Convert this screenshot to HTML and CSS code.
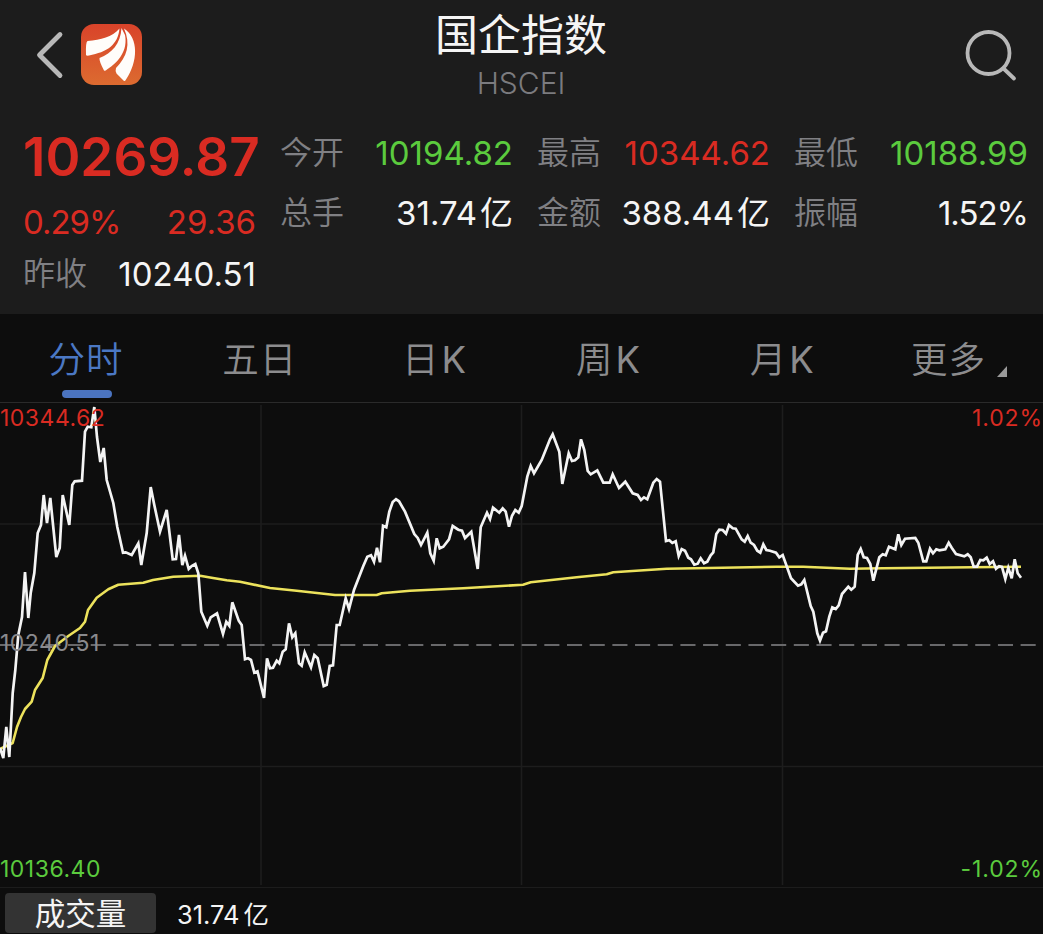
FILE: index.html
```
<!DOCTYPE html>
<html lang="zh-CN">
<head>
    <meta charset="UTF-8">
    <meta name="viewport" content="width=device-width, initial-scale=1.0">
    <title>国企指数 HSCEI</title>
    <link rel="stylesheet" href="styles.css">
</head>
<body>

<header class="top-bar">
    <div class="top-left">
        <svg class="back-icon" width="28" height="48" viewBox="0 0 28 48">
            <path d="M24 3.5 L3.500 24 L24 44.5"/>
        </svg>
        <svg class="logo" width="61" height="61" viewBox="0 0 61 61">
            <defs>
                <linearGradient id="logoBg" x1="0" y1="0" x2="0" y2="1">
                    <stop offset="0" stop-color="#d9432a"/>
                    <stop offset="1" stop-color="#dc6b30"/>
                </linearGradient>
            </defs>
            <rect width="61" height="61" rx="13" fill="url(#logoBg)"/>
            <path fill="#fffdfa" d="M38.500 4.500 C31 13 20 16 6.500 17 Q4.500 18 5 31 Q5.500 32 8 31.500 C26 28 37 21 38.500 4.500 Z"/>
            <path fill="#fffdfa" d="M40.500 4 C39.500 20 31 29 18.500 34 Q18 37 23 46.500 Q24 47.500 26 45.500 C38 38 47 26 44 11 Z"/>
            <path fill="#fffdfa" d="M43 4.500 C50 20 46 33 35 44 Q34 47 35.500 49.500 L43 57 Q44 57.500 45 55.500 C57 38 58 14 43 4.500 Z"/>
        </svg>
    </div>
    <div class="title">
        <h1>国企指数</h1>
        <p>HSCEI</p>
    </div>
    <svg class="search-icon" width="54" height="54" viewBox="0 0 54 54">
        <circle cx="24.500" cy="25" r="21"/>
        <path d="M39.500 40.500 L50 50.500"/>
    </svg>
</header>

<section class="quote">
    <div class="quote-main">
        <div class="price red">10269.87</div>
        <div class="row change red"><span class="percent">0.29%</span><span>29.36</span></div>
        <div class="row"><span class="label">昨收</span><span>10240.51</span></div>
    </div>
    <div class="quote-grid">
        <div class="row"><span class="label">今开</span><span class="green">10194.82</span></div>
        <div class="row"><span class="label">最高</span><span class="red">10344.62</span></div>
        <div class="row"><span class="label">最低</span><span class="green">10188.99</span></div>
        <div class="row"><span class="label">总手</span><span>31.74<span class="unit">亿</span></span></div>
        <div class="row"><span class="label">金额</span><span>388.44<span class="unit">亿</span></span></div>
        <div class="row"><span class="label">振幅</span><span class="percent">1.52%</span></div>
    </div>
</section>

<nav class="tabs">
    <a class="active">分时</a>
    <a>五日</a>
    <a>日<span class="k">K</span></a>
    <a>周<span class="k">K</span></a>
    <a>月<span class="k">K</span></a>
    <a class="more">更多<span class="corner"></span></a>
</nav>

<div class="chart">
    <svg width="1043" height="486" viewBox="0 402 1043 486">
        <g class="grid-lines">
            <path d="M0 524H1043M0 766.500H1043"/>
            <path d="M261 405V885M521.500 405V885M782.500 405V885"/>
        </g>
        <path class="base-line" d="M0 645H1036"/>
        <polyline class="avg-line" points="0,749 12.7,743 17,727 21,717 25,709 31.7,701.7 35,690 42.700,678 47.300,660 55,646 68.300,636 80,628 85,621.700 88,610 96.700,597.700 108.300,589.300 118.300,584.700 143.300,582.700 153,580 173.300,576.700 200,575.700 213,578 226.700,580.300 240,581.700 270,588 296.700,590.700 335,595 376.700,595 381.700,593.300 410,590.700 463,588.300 523,584.700 530.700,582.300 576.700,577.300 606.700,574.300 613.300,572.300 666.700,568.700 776.700,566.700 803,566.700 850,568.700 883,568.300 1021,566.700"/>
        <polyline class="price-line" points="0,748 3.3,758 6.3,727 9.300,757 12.700,693 15.300,670 18.300,635 22,617 25,572 28.300,618 30.700,593 34.300,573 37.700,533 41,525 43.700,495 47,523 50.300,498 56.300,557 59.700,548 62.700,495 69.300,525 72.300,485 74.700,481.300 82,480.700 85,431.700 87.700,426.700 91.300,427.300 94.300,407 97,437 100.300,462 103.700,448 106.700,480 113.300,503 117.300,527 123,552.700 125.700,552.300 131.700,555 138.300,543.300 141.300,565 146.700,533 150.700,487 154.300,505 160,531.700 166.700,510 172.700,559.300 176,559 179,535 182.300,565 185,555.700 188.700,569 191.700,566 195.300,564 198.300,573.300 201.300,611.700 207.300,625.700 210.700,617.300 217,613.300 223,634 226.300,621.700 229.300,625.700 232.300,602.300 238.700,620.700 241.700,625 245,659.300 248,658.300 251,660 254.300,672.700 257.500,671.300 264,698 267,658.300 270,668.300 273,667.700 276.700,660.700 279.300,663.300 282.700,651.700 285.700,649.300 289,623.300 292.300,637.300 295.300,633.300 299,663.300 301.700,665.700 304.700,652.300 311,667.300 314.300,655 317.700,658.300 323.700,686 326.700,684.700 329.700,666 333,665.300 336.700,625 339.700,625 345.700,598.300 349,609 354,590 363.300,566 367.300,556.700 371,555.300 374,561.700 377,547.700 380,562.300 383,525.700 386.300,527.300 389.300,511.700 392.700,502 396,499.300 399,501.300 405,511.700 414.300,534 417.700,538 421,545 427.300,532.700 430.300,553.300 433.700,560.700 436.700,538.300 439.700,548.300 443.300,546.700 449,539.300 452.700,526 458.300,529.700 462,530.700 465,538 471.300,531.700 477.700,569 480.700,527.300 487,512.700 490,519 493,507.700 499.300,512.700 502.700,508.300 505.700,511.700 509,526.700 512,515.700 515.300,510 518.700,512.700 521.700,506 527.300,476.700 530.700,466 534,473.300 541.700,460 550,439.300 552.700,434.300 559.300,451.700 562.300,484 568.700,453.300 572,461 575,460.300 578.300,457.300 581,439.300 584.300,450 587.700,471 590.700,474.300 597.300,470.300 603.300,482.700 609.700,482.700 612.700,474.300 619,488 625.300,481.700 632.700,493.300 637.700,495 641,500 644,497.300 647.300,499.300 653.300,482.700 656.700,479 660,481.700 666,541 669.300,540.300 672.300,543 675.700,541.300 678.700,556 681.700,549 685,550.700 688.300,557.700 691,559.300 694.300,564.700 697.700,563.700 700.700,558.300 704,563.300 707.300,561.700 710.700,555.300 713.300,552.300 716.300,534 719.300,529.700 722.700,530 726,533.700 729,525 732.700,528.300 735.700,528.700 741.700,539.300 744.700,541.700 747.700,536 750.700,542.700 754,545 757.300,550.700 760.300,552.700 763.300,544.300 766.300,550 770,550.700 776,552.700 779.300,557.300 782.700,555 791,578.300 798,585.700 801.300,584.300 804.300,580 810.700,606 813.300,611.700 817.300,633.300 820,640.700 823,632.700 826,631.300 829.300,616.700 832.300,607.300 835.700,609 838.700,605.300 842,594 848.300,586.700 851.300,589.700 854.700,586.700 857.700,555 860.700,549 863.700,557.300 867,558 870.300,564 873.300,580.700 879.300,557.300 882.700,554.300 885.700,555.300 889,546.700 895.300,549.300 898.300,534.300 901.300,545 905,538.700 915.300,538 918.300,542.700 923.300,561.300 926.300,561.300 930,548.700 933,553.300 936.300,549.300 939.300,550.300 945.300,549.300 948.700,542.700 951.700,547.700 956,554 964.300,556.300 967.700,554.300 970.700,557.300 973.700,566.700 977,566.700 980.300,560 983.300,560.300 986.700,557.700 989.700,564 993,561.300 996,568.700 999,566.300 1002,567 1005.300,579 1008.300,567.700 1011.700,578.300 1014.700,559.300 1017.700,573.300 1021,577.700"/>
    </svg>
    <span class="axis top left red">10344.62</span>
    <span class="axis top right red">1.02%</span>
    <span class="axis middle left">10240.51</span>
    <span class="axis bottom left green">10136.40</span>
    <span class="axis bottom right green">-1.02%</span>
</div>

<footer class="volume">
    <span class="volume-btn">成交量</span>
    <span class="volume-value">31.74<span class="unit">亿</span></span>
</footer>

</body>
</html>
```
FILE: styles.css
```
body {
    margin: 0;
    width: 1043px;
    height: 934px;
    overflow: hidden;
    background-color: #0d0d0d;
    color: #f5f5f5;
    font-family: Inter, "Noto Sans CJK SC", sans-serif;
    font-weight: 400;
}
.red {
    color: #d92b22;
}
.green {
    color: #5bcb3e;
}
.top-bar {
    display: grid;
    grid-template-columns: 199px 1fr 200px;
    height: 122px;
    background-color: #1c1c1c;
}
.top-left {
    display: flex;
    align-items: center;
    gap: 17px;
    height: 61px;
    padding: 24px 0 0 36px;
}
.back-icon,
.search-icon {
    fill: none;
    stroke: #b8b8b8;
    stroke-width: 4.8;
    stroke-linecap: round;
    stroke-linejoin: round;
}
.search-icon {
    justify-self: end;
    margin: 28px 25px 0 0;
    stroke-width: 3.8;
}
.title {
    text-align: center;
}
.title h1 {
    margin: 0;
    padding-top: 5px;
    font-size: 43px;
    font-weight: 400;
    line-height: 61px;
}
.title p {
    margin: 0;
    color: #7b7b7f;
    font-size: 30px;
    font-weight: 350;
    line-height: 34px;
}
.quote {
    display: flex;
    gap: 24px;
    height: 192px;
    padding: 0 14px 0 23px;
    background-color: #1c1c1c;
    font-size: 33px;
}
.quote-main {
    width: 233px;
}
.price {
    font-size: 53px;
    font-weight: 600;
    line-height: 70px;
}
.row {
    display: flex;
    justify-content: space-between;
    line-height: 60px;
    white-space: nowrap;
}
.quote-main .row {
    line-height: 52px;
}
.quote-main .change {
    padding-top: 4px;
}
.quote-grid {
    flex: 1;
    display: grid;
    grid-template-columns: 233px 233px 234px;
    grid-template-rows: 60px 60px;
    column-gap: 24px;
    padding-top: 1px;
}
.label {
    color: #808084;
    font-size: 32px;
    font-weight: 350;
}
.percent {
    letter-spacing: -1px;
}
.unit {
    margin-left: 3px;
}
.tabs {
    display: grid;
    grid-template-columns: repeat(6, 1fr);
    height: 88px;
    font-size: 36.500px;
    line-height: 92px;
    letter-spacing: 1px;
    text-align: center;
    color: #8c8c8e;
    font-weight: 350;
}
.tabs a {
    position: relative;
}
.tabs .active {
    color: #4b78c4;
}
.tabs .active::after {
    content: "";
    position: absolute;
    left: 62px;
    bottom: 4px;
    width: 50px;
    height: 8px;
    border-radius: 4px;
    background-color: #4b74c0;
}
.tabs .more {
    padding-left: 6px;
}
.k {
    margin-left: 2px;
    font-weight: 400;
}
.corner {
    display: inline-block;
    margin: 0 0 -4px 11px;
    border-left: 10px solid transparent;
    border-bottom: 11px solid #9a9a9a;
}
.chart {
    position: relative;
    height: 486px;
    box-shadow: inset 0 1px #2a2a2a, inset 0 -1px #1c1c1c;
}
.chart svg {
    display: block;
}
.grid-lines {
    fill: none;
    stroke: #1d1d1d;
    stroke-width: 1.6;
}
.base-line {
    stroke: #68686a;
    stroke-width: 1.8;
    stroke-dasharray: 15.1 7.58;
}
.avg-line {
    fill: none;
    stroke: #ece25c;
    stroke-width: 2.6;
    stroke-linejoin: round;
}
.price-line {
    fill: none;
    stroke: #f4f4f4;
    stroke-width: 2.7;
    stroke-linejoin: miter;
}
.axis {
    position: absolute;
    font-size: 23px;
    line-height: 28px;
    letter-spacing: 0.5px;
}
.left {
    left: 0;
}
.right {
    right: 0;
    letter-spacing: 0.9px;
}
.top {
    top: 2px;
}
.middle {
    top: 227px;
    color: #8a8a8e;
}
.bottom {
    bottom: 5px;
}
.volume {
    display: flex;
    align-items: center;
    gap: 21px;
    height: 46px;
    padding: 3px 0 0 5px;
    box-sizing: border-box;
}
.volume-btn {
    width: 151px;
    height: 40px;
    border-radius: 4px;
    background-color: #333333;
    font-size: 30.500px;
    line-height: 41px;
    text-align: center;
}
.volume-value {
    font-size: 25.500px;
}
.tabs a:nth-child(-n+2) {
    height: 88px;
    right: 1px;
}
.tabs .active::after {
    left: 63px;
}
.volume-value .unit {
    margin-left: 4px;
}
```
